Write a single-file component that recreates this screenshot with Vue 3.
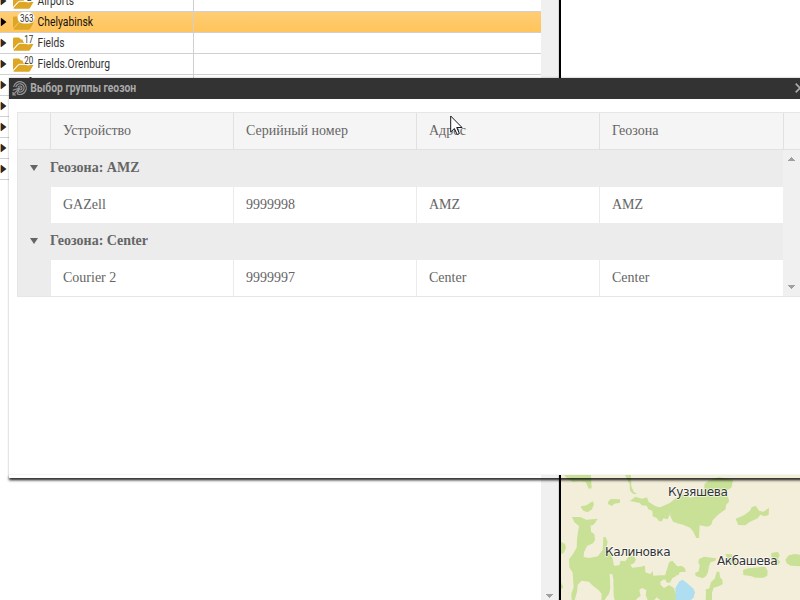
<script setup>
const folders = [
  { name: 'Airports', count: '2', width: 36.5 },
  { name: 'Chelyabinsk', count: '363', width: 55.5, selected: true },
  { name: 'Fields', count: '17', width: 27 },
  { name: 'Fields.Orenburg', count: '20', width: 72.5 },
  { covered: true }, {}, {}, {}, {},
]
const columns = ['Устройство', 'Серийный номер', 'Адрес', 'Геозона']
const groups = [
  { title: 'Геозона: AMZ', cells: ['GAZell', '9999998', 'AMZ', 'AMZ'] },
  { title: 'Геозона: Center', cells: ['Courier 2', '9999997', 'Center', 'Center'] },
]
</script>

<template>
  <div class="screen">
    <div class="workspace">
      <div class="tree">
        <div v-for="(f, i) in folders" :key="i" class="tree-row" :class="{ selected: f.selected }">
          <svg class="tree-name" width="193" height="20" viewBox="0 0 193 20">
            <path d="M0 6v8l2-1V7z" fill="#f0a24b" />
            <path d="M1 5.7L6.5 10 1 14.3z" :fill="f.selected ? '#000' : '#252b33'" />
            <path v-if="f.covered" d="M29.5 2h2v3h-2z" fill="#333" />
            <template v-if="f.count">
              <path d="M13 5.5Q13 4.5 14.5 4.5H19l2 2h9q2 0 2 2v2H20q-2 0-3 2l-4 4z" fill="#dda625" />
              <path d="M13.5 17l4.5-5q.7-1 2-1h13.5L30 17q-.3.7-1.5.7H14.5q-1.3 0-1-.7z" fill="#dda625" />
              <path d="M13.5 16l4.2-4.9q.8-.8 2-.8H32" fill="none" :stroke="f.selected ? '#ecb94d' : '#fff'" stroke-width=".9" />
              <rect :x="f.count.length > 2 ? 17.5 : 22.5" y="0" :width="f.count.length > 2 ? 17 : 11.5" height="11.5" rx="5.7" fill="#fff" />
              <text :x="f.count.length > 2 ? 20 : f.count.length > 1 ? 24.3 : 27" y="9.5" class="count" :textLength="f.count.length * 4.5" lengthAdjust="spacingAndGlyphs">{{ f.count }}</text>
              <text x="37.5" y="14" class="label" :textLength="f.width" lengthAdjust="spacingAndGlyphs">{{ f.name }}</text>
            </template>
          </svg>
          <div class="tree-value"></div>
        </div>
      </div>
      <div class="scrollbar">
        <svg width="7" height="4" viewBox="0 0 7 4" shape-rendering="crispEdges"><path d="M0 0h7L3.5 4z" fill="#a0a0a0" /></svg>
      </div>
      <div class="divider"></div>
      <div class="map-pane">
        <svg class="map" width="239" height="125" viewBox="63 30 717 375">
          <rect x="63" y="30" width="717" height="375" fill="#f3eed9" />
          <g fill="#c9e197">
            <path d="M72 30H153L155 70 146 71 137 51 118 49 99 51 83 42Z" />
            <path d="M255 30H273L274 64 281 80 291 87 280 87 270 77 269 58Z" />
            <path d="M123 124L139 121 158 109 162 117 156 133 143 142 130 137 123 128Z" />
            <path d="M204 111L212 102 240 103 240 113 223 116 216 123 204 117Z" />
            <path d="M270 108L286 95 306 101 321 97 326 111 347 124 361 127 389 114 411 97 420 91 442 79 448 97 430 107 412 121 396 137 389 149 383 163 370 160 366 169 357 169 351 160 338 154 337 137 325 133 320 122 305 121 299 114Z" />
            <path d="M390 151L394 134 404 119 417 108 440 99 458 97 479 87 493 75 493 58 505 47 536 37 564 42 579 45 575 67 557 79 566 101 567 110 558 120 557 133 536 148 518 166 514 179 503 185 479 181 477 219 469 219 459 199 450 188 429 179 417 176 399 170Z" />
            <path d="M587 161L612 151 629 138 635 127 647 122 657 137 671 140 687 128 686 150 673 154 661 149 653 160 629 171 616 181 595 180Z" />
            <path d="M96 156L121 156 139 164 173 161 161 179 152 182 153 200 163 207 165 225 159 235 141 243 132 262 131 276 147 279 174 274 188 254 190 217 196 215 203 230 200 245 209 260 218 280 222 302 238 301 242 287 256 289 265 275 281 272 288 284 282 295 271 299 277 308 302 305 315 302 316 322 331 327 338 318 340 332 361 331 381 331 385 317 386 294 397 289 411 304 426 303 434 309 438 320 414 322 406 335 390 342 370 344 361 350 362 360 372 369 387 360 402 369 406 384 418 405 360 405 350 397 343 405 323 405 317 391 319 375 306 369 298 374 302 393 293 399 288 405 224 405 221 392 220 342 217 328 209 326 211 370 207 386 199 397 194 405 184 405 185 387 176 376 157 361 147 350 125 347 113 359 111 381 104 405 95 405 94 386 101 367 98 323 88 307 87 283 99 267 110 248 111 221 117 183 103 172Z" />
            <path d="M63 230L75 237 78 248 71 264 63 268Z M63 351L70 366 63 374Z" />
            <path d="M375 331L382 309 389 290 397 287 411 304 420 319 416 330 401 333 389 354 378 351Z" />
            <path d="M477 282L492 275 528 280 526 287 512 292 507 304 504 322 498 334 488 340 477 336 467 333 465 324 476 319 479 302 475 292Z" />
            <path d="M530 320L538 320 540 337 547 344 548 357 540 362 521 368 516 383 516 405 497 405 498 379 496 374 508 370 513 351 524 341Z" />
            <path d="M609 315L624 310 675 305 683 317 682 332 670 338 646 338 632 333 610 330Z" />
            <path d="M736 284L746 271 764 267 780 269 780 304 752 302 740 295Z" />
            <path d="M556 267L576 268 580 281 590 290 586 306 575 295 561 278Z M694 264L714 260 719 272 713 282 721 291 713 300 701 302 694 290Z" />
          </g>
          <path d="M406 370L417 350 427 344 440 353 459 370 465 382 461 397 453 405 407 405Z" fill="#aedef0" />
          <path d="M640 281l8-3 5 5-4 7-7-2z" fill="#aedef0" />
          <g class="place">
            <text x="384" y="93" textLength="180">Кузяшева</text>
            <text x="195" y="273" textLength="197">Калиновка</text>
            <text x="531" y="299" textLength="182">Акбашева</text>
          </g>
        </svg>
      </div>
    </div>

    <div class="dialog">
      <header class="titlebar">
        <svg width="124" height="21" viewBox="0 0 124 21">
          <g fill="none" stroke="#969696" stroke-width="1.2">
            <path d="M4.6 9A6.4 6.4 0 1 1 8.5 16" />
            <path d="M6.8 9.2A4.2 4.2 0 1 1 9.8 14" />
            <path d="M9 9.6A2 2 0 1 1 11 12" />
            <path d="M3.8 12.2L10.8 10 8 16.2M4 16.8L10.8 10M4 14v3h3" />
          </g>
          <text x="21.2" y="14" textLength="106" lengthAdjust="spacingAndGlyphs">Выбор группы геозон</text>
        </svg>
        <svg class="close" width="6" height="10" viewBox="0 0 6 10"><path d="M.7 .7L9.3 9.3M.7 9.3L9.3 .7" fill="none" stroke="#aaa" stroke-width="1.7" /></svg>
      </header>
      <div class="body">
        <div class="grid">
          <div class="head">
            <div class="gutter"></div>
            <div v-for="c in columns" :key="c" class="th">{{ c }}</div>
            <div class="corner"></div>
          </div>
          <div class="content">
            <div class="groups">
              <section v-for="g in groups" :key="g.title">
                <div class="group-title">
                  <svg width="8" height="6" viewBox="0 0 8 6"><path d="M0 0h8L4 6z" fill="#656565" /></svg>
                  <span>{{ g.title }}</span>
                </div>
                <div class="row">
                  <div class="gutter"></div>
                  <div v-for="(v, i) in g.cells" :key="i" class="td">{{ v }}</div>
                </div>
              </section>
            </div>
            <div class="grid-scroll">
              <svg width="7" height="4" viewBox="0 0 7 4" shape-rendering="crispEdges"><path d="M0 4h7L3.5 0z" fill="#a0a0a0" /></svg>
              <svg width="7" height="4" viewBox="0 0 7 4" shape-rendering="crispEdges"><path d="M0 0h7L3.5 4z" fill="#a0a0a0" /></svg>
            </div>
          </div>
        </div>
      </div>
      <div class="dialog-edge"></div>
    </div>

    <svg class="cursor" width="13" height="21" viewBox="0 0 13 21"><path d="M.7 1v16l3.7-3.5 2.8 6 2.2-1-2.7-6H12z" fill="#fff" stroke="#16161f" stroke-width="1" /></svg>
  </div>
</template>

<style>
body { margin: 0; background: #fff; }
</style>

<style scoped>
.screen { position: relative; width: 800px; height: 600px; overflow: hidden; background: #fff; }
.screen * { box-sizing: border-box; }
svg { display: block; flex: none; }
.workspace { display: flex; height: 600px; }
.tree { width: 541px; margin-top: -9px; }
.tree-row { display: flex; height: 21px; border-bottom: 1px solid #d0d0d0; }
.tree-value { flex: 1; border-left: 1px solid #d0d0d0; }
.selected { background: linear-gradient(#ffcd75, #ffc45b); }
.label { font: 13px Roboto, sans-serif; fill: #333; }
.selected .label { fill: #16120a; }
.count { font: 10.5px Roboto, sans-serif; fill: #333; }
.scrollbar { display: flex; align-items: flex-end; width: 17px; padding: 0 0 2px 5px; background: #f0f0f0; }
.divider { width: 3px; border-left: 1px solid #d8d8d8; background: #000; }
.map-pane { display: flex; align-items: flex-end; width: 239px; }
.place { font: 36.5px "DejaVu Sans", sans-serif; fill: #333; stroke: #fff; stroke-opacity: .75; stroke-width: 5px; stroke-linejoin: round; paint-order: stroke; }
.dialog { position: absolute; left: 9px; top: 78px; width: 810px; height: 400px; display: flex; flex-direction: column; box-shadow: 0 0 2px rgba(0, 0, 0, .32); clip-path: inset(-4px -4px -8px -4px); }
.titlebar { display: flex; align-items: center; height: 21px; background: #333; }
.titlebar text { font: bold 13px Roboto, sans-serif; fill: #aaa; }
.titlebar svg:first-child { overflow: visible; }
.close { margin: -1px 0 0 662px; }
.body { height: 376px; padding: 13px 0 0 8px; background: #fff; }
.dialog-edge { height: 3px; box-shadow: 0 2px 3px #000; }
.grid { border: 1px solid #e6e6e6; font: 14px/20px "Liberation Serif", serif; color: #656565; }
.head { display: flex; height: 36px; background: #f5f5f5; }
.gutter { width: 32px; flex: none; }
.th, .td { width: 183px; flex: none; padding: 8px 12px; border-left: 1px solid #e1e1e1; white-space: nowrap; }
.th:nth-last-child(2) { width: 184px; }
.corner { flex: 1; border-left: 1px solid #e1e1e1; }
.content { display: flex; height: 147px; border-top: 1px solid #e1e1e1; }
.groups { width: 765px; background: #ececec; }
.group-title { display: flex; align-items: center; gap: 12px; height: 37px; padding: 0 12px 1px; font-weight: bold; }
.row { display: flex; height: 36px; }
.td { background: #fff; border-left-color: #ebebeb; }
.td:last-child { width: 184px; }
.grid-scroll { display: flex; flex: 1; flex-direction: column; justify-content: space-between; padding: 7px 5px; background: #f0f0f0; }
.cursor { position: absolute; left: 450px; top: 115px; }
</style>
